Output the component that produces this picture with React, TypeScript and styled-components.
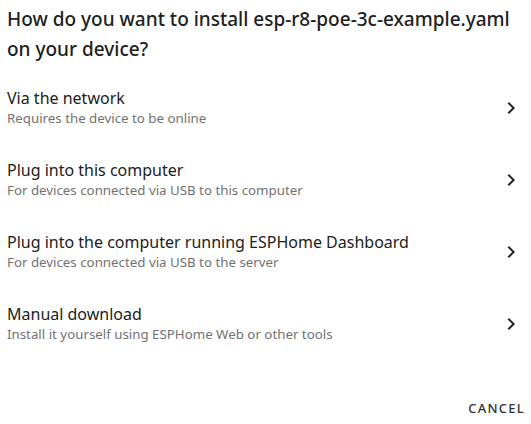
import { createGlobalStyle } from "styled-components";
import styled from "styled-components";

const GlobalStyle = createGlobalStyle`
    html, body {
        margin: 0;
        padding: 0;
        background: #ffffff;
    }
    body {
        font-family: "Noto Sans", "Open Sans", sans-serif;
        color: #212121;
    }
`;

const Dialog = styled.div`
    width: 531px;
    height: 424px;
    display: flex;
    flex-direction: column;
    box-sizing: border-box;
`;

const Title = styled.h2`
    margin: 0;
    padding: 4px 7px 0 7px;
    font-size: 19px;
    font-weight: 500;
    line-height: 30px;
    color: #212121;
    height: 68px;
`;

const List = styled.div`
    display: flex;
    flex-direction: column;
`;

const Item = styled.div`
    height: 72px;
    display: flex;
    align-items: center;
    padding: 0 7px;
    cursor: pointer;
`;

const ItemText = styled.div`
    flex: 1;
    display: flex;
    flex-direction: column;
    min-width: 0;
`;

const Primary = styled.span`
    font-size: 16px;
    line-height: 20px;
    color: #212121;
`;

const Secondary = styled.span`
    font-size: 13.3px;
    line-height: 20px;
    color: #727272;
`;

const Chevron = styled.svg`
    width: 24px;
    height: 24px;
    flex-shrink: 0;
    margin-right: 1px;
    fill: #212121;
`;

const Actions = styled.div`
    margin-top: auto;
    display: flex;
    justify-content: flex-end;
    padding: 0 6px 7px 0;
`;

const TextButton = styled.button`
    border: none;
    background: none;
    padding: 0;
    font-family: inherit;
    font-size: 13px;
    font-weight: 500;
    letter-spacing: 1.25px;
    text-transform: uppercase;
    color: #333;
    line-height: 18px;
    cursor: pointer;
`;

const options = [
    { title: "Via the network", sub: "Requires the device to be online" },
    { title: "Plug into this computer", sub: "For devices connected via USB to this computer" },
    {
        title: "Plug into the computer running ESPHome Dashboard",
        sub: "For devices connected via USB to the server",
    },
    { title: "Manual download", sub: "Install it yourself using ESPHome Web or other tools" },
];

export default function App() {
    return (
        <>
            <GlobalStyle />
            <Dialog>
                <Title>How do you want to install esp-r8-poe-3c-example.yaml on your device?</Title>
                <List>
                    {options.map((o) => (
                        <Item key={o.title}>
                            <ItemText>
                                <Primary>{o.title}</Primary>
                                <Secondary>{o.sub}</Secondary>
                            </ItemText>
                            <Chevron viewBox="0 0 24 24">
                                <path d="M8.59 16.59L13.17 12 8.59 7.41 10 6l6 6-6 6-1.41-1.41z" />
                            </Chevron>
                        </Item>
                    ))}
                </List>
                <Actions>
                    <TextButton>Cancel</TextButton>
                </Actions>
            </Dialog>
        </>
    );
}
